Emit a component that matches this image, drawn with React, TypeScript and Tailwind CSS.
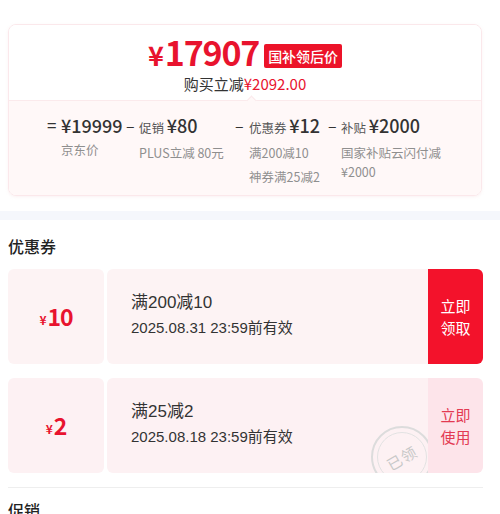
import React from "react";

const font = { fontFamily: '"Noto Sans CJK SC", "Noto Sans", sans-serif' };
const latin = { fontFamily: '"Liberation Sans", "Noto Sans CJK SC", sans-serif' };

const Breakdown = () => (
  <div className="flex pl-[38px] pt-[12px] text-[#333]">
    <div className="flex w-[79px]">
      <span className="w-[14px] text-[17px] leading-[24px]">=</span>
      <div>
        <div className="text-[18px] font-medium leading-[24px]">¥19999</div>
        <div className="text-[12.5px] text-[#8f8f8f] leading-[24px] mt-[1px]">京东价</div>
      </div>
    </div>
    <div className="flex w-[109px]">
      <span className="w-[13px] text-[16px] leading-[24px]">–</span>
      <div>
        <div className="leading-[24px] whitespace-nowrap">
          <span className="text-[12.5px] text-[#555]">促销 </span>
          <span className="text-[18px] font-medium">¥80</span>
        </div>
        <div className="text-[12.5px] text-[#8f8f8f] leading-[24px] mt-[1px] whitespace-nowrap">PLUS立减 80元</div>
      </div>
    </div>
    <div className="flex w-[93px]">
      <span className="w-[14px] text-[16px] leading-[24px]">–</span>
      <div>
        <div className="leading-[24px] whitespace-nowrap">
          <span className="text-[12.5px] text-[#555]">优惠券 </span>
          <span className="text-[18px] font-medium">¥12</span>
        </div>
        <div className="text-[12.5px] text-[#8f8f8f] leading-[24px] mt-[1px] whitespace-nowrap">满200减10</div>
        <div className="text-[12.5px] text-[#8f8f8f] leading-[24px] whitespace-nowrap">神券满25减2</div>
      </div>
    </div>
    <div className="flex w-[120px]">
      <span className="w-[13px] text-[16px] leading-[24px]">–</span>
      <div>
        <div className="leading-[24px] whitespace-nowrap">
          <span className="text-[12.5px] text-[#555]">补贴 </span>
          <span className="text-[18px] font-medium">¥2000</span>
        </div>
        <div className="text-[12.5px] text-[#8f8f8f] leading-[19px] mt-[3px] w-[104px]">国家补贴云闪付减 ¥2000</div>
      </div>
    </div>
  </div>
);

type CouponProps = {
  amount: string;
  title: string;
  date: string;
  action: [string, string];
  used?: boolean;
};

const Coupon = ({ amount, title, date, action, used }: CouponProps) => (
  <div className="flex h-[95px]">
    <div className={`w-[96px] rounded-[6px] flex items-center justify-center text-[#e8132e] ${used ? "bg-[#fdf1f3]" : "bg-[#fdf3f4]"}`}>
      <span className="text-[12px] font-semibold mt-[6px] mr-[1px]">¥</span>
      <span className="text-[23px] font-semibold leading-none tracking-[-1px]">{amount}</span>
    </div>
    <div className={`relative ml-[3px] flex-1 rounded-l-[6px] overflow-hidden flex flex-col justify-center pl-[24px] pb-[4px] ${used ? "bg-[#fdf1f3]" : "bg-[#fdf3f4]"}`} style={latin}>
      <div className="text-[17px] text-[#333] leading-[24px]">{title}</div>
      <div className="text-[15px] text-[#333] leading-[22px] mt-[2px]">{date}</div>
      {used && (
        <div className="absolute left-[264px] top-[48px] w-[62px] h-[62px] rounded-full border-2 border-[#dcdcdc] flex items-center justify-center">
          <div className="w-[50px] h-[50px] rounded-full border border-[#e2e2e2] flex items-center justify-center">
            <span className="text-[15px] text-[#c8c8c8] -rotate-[30deg] tracking-[1px] mt-[2px]" style={font}>已领</span>
          </div>
        </div>
      )}
    </div>
    <div className={`w-[55px] rounded-r-[6px] flex flex-col items-center justify-center text-[15px] leading-[22px] ${used ? "bg-[#fde4ea] text-[#e33a52]" : "bg-[#f3122b] text-white"}`}>
      <span>{action[0]}</span>
      <span>{action[1]}</span>
    </div>
  </div>
);

export default function App() {
  return (
    <div className="w-[500px] h-[514px] overflow-hidden bg-white" style={font}>
      <div className="pt-[24px] px-2 pb-[15px]">
        <div className="w-[474px] rounded-[8px] border border-[#fbe8eb] overflow-hidden shadow-[0_1px_3px_rgba(240,200,205,0.25)]">
          <div className="h-[75px] bg-white flex flex-col items-center pt-[10px]">
            <div className="flex items-end h-[34px]">
              <span className="flex items-baseline text-[#e8132e] leading-none h-[34px]">
                <span className="text-[27px] font-semibold mr-[1px]">¥</span>
                <span className="text-[34px] font-semibold tracking-[-1.2px]">17907</span>
              </span>
              <span className="ml-[5px] mb-[1px] bg-[#ec1329] text-white text-[14px] font-medium leading-[24px] px-[4px] rounded-[2px]">国补领后价</span>
            </div>
            <div className="text-[15px] leading-[20px] mt-[5px]">
              <span className="text-[#333]">购买立减</span>
              <span className="text-[#e8132e]">¥2092.00</span>
            </div>
          </div>
          <div className="relative h-[95px] bg-[#fff8f8] border-t border-[#fbeaec]">
            <div className="absolute left-[239px] -top-[4px] w-[7px] h-[7px] rotate-45 bg-[#fff8f8] border-l border-t border-[#fbeaec]" />
            <Breakdown />
          </div>
        </div>
      </div>
      <div className="h-[9px] bg-[#f5f7fc]" />
      <div className="px-2">
        <div className="text-[16px] font-medium text-[#222] leading-[20px] mt-[16px]">优惠券</div>
        <div className="w-[475px] mt-[13px] flex flex-col gap-[14px]">
          <Coupon amount="10" title="满200减10" date="2025.08.31 23:59前有效" action={["立即", "领取"]} />
          <Coupon amount="2" title="满25减2" date="2025.08.18 23:59前有效" action={["立即", "使用"]} used />
        </div>
        <div className="w-[475px] h-px bg-[#eeeeee] mt-[14px]" />
        <div className="text-[16px] font-medium text-[#222] leading-[20px] mt-[12px]">促销</div>
      </div>
    </div>
  );
}
